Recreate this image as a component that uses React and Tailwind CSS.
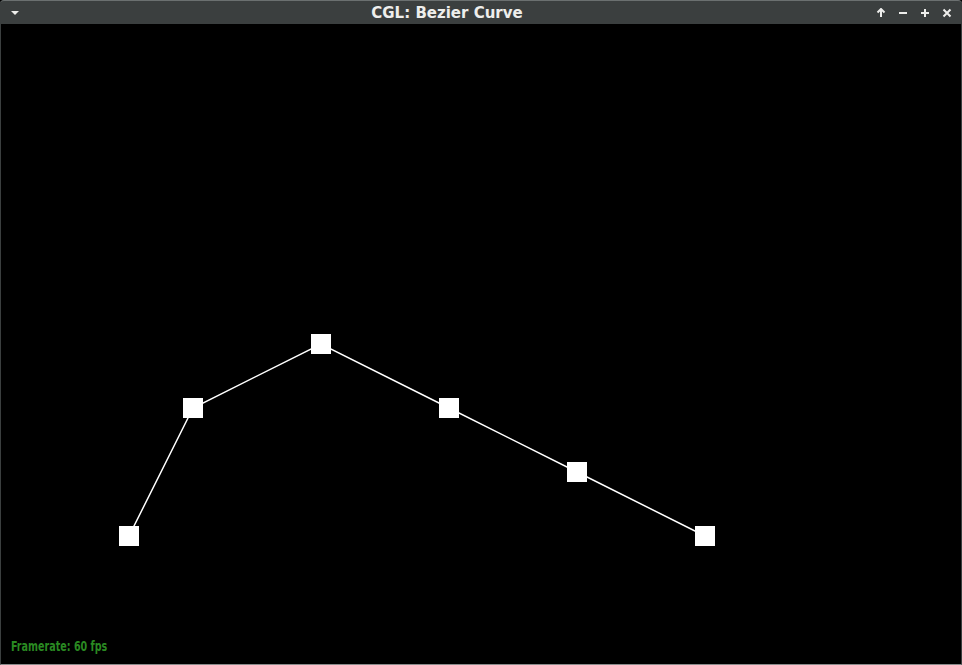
const points = [
  [128, 512],
  [192, 384],
  [320, 320],
  [448, 384],
  [576, 448],
  [704, 512],
];

function TitleButton({ children }) {
  return (
    <svg width="10" height="10" viewBox="0 0 10 10" className="text-[#eeeeec]">
      {children}
    </svg>
  );
}

export default function App() {
  return (
    <div className="flex h-[665px] w-[962px] flex-col bg-black font-['DejaVu_Sans',sans-serif]">
      <div className="flex h-[24px] shrink-0 items-center rounded-t-[4px] border-t border-[#6b7070] bg-[#3b3f3f] px-[10px]">
        <svg width="10" height="6" viewBox="0 0 10 6">
          <path d="M1 1h8L5 5z" fill="#eeeeec" />
        </svg>
        <div className="flex-1 pr-[2px] pt-[2px] text-center text-[15px] font-bold leading-none text-[#eeeeec]">
          CGL: Bezier Curve
        </div>
        <div className="flex items-center gap-[12px]">
          <TitleButton>
            <path d="M5 1v8M1.5 4.5L5 1l3.5 3.5" stroke="currentColor" strokeWidth="2" fill="none" />
          </TitleButton>
          <TitleButton>
            <path d="M1 5h8" stroke="currentColor" strokeWidth="2" />
          </TitleButton>
          <TitleButton>
            <path d="M1 5h8M5 1v8" stroke="currentColor" strokeWidth="2" />
          </TitleButton>
          <TitleButton>
            <path d="M1.5 1.5l7 7M8.5 1.5l-7 7" stroke="currentColor" strokeWidth="2" />
          </TitleButton>
        </div>
      </div>
      <div className="relative flex-1 border-x border-b border-x-[#3b3f3f] border-b-[#8a8c8c]">
        <svg width="960" height="640" className="block">
          <polyline
            points={points.map((p) => p.join(",")).join(" ")}
            fill="none"
            stroke="#ffffff"
            strokeWidth="1.5"
          />
          {points.map(([x, y]) => (
            <rect key={x} x={x - 10} y={y - 10} width="20" height="20" fill="#ffffff" />
          ))}
        </svg>
        <div className="absolute bottom-[11px] left-[10px] origin-left scale-x-[0.76] font-['DejaVu_Sans_Condensed','DejaVu_Sans',sans-serif] text-[14px] font-bold leading-none font-stretch-condensed text-[#2a8a22]">
          Framerate: 60 fps
        </div>
      </div>
    </div>
  );
}
